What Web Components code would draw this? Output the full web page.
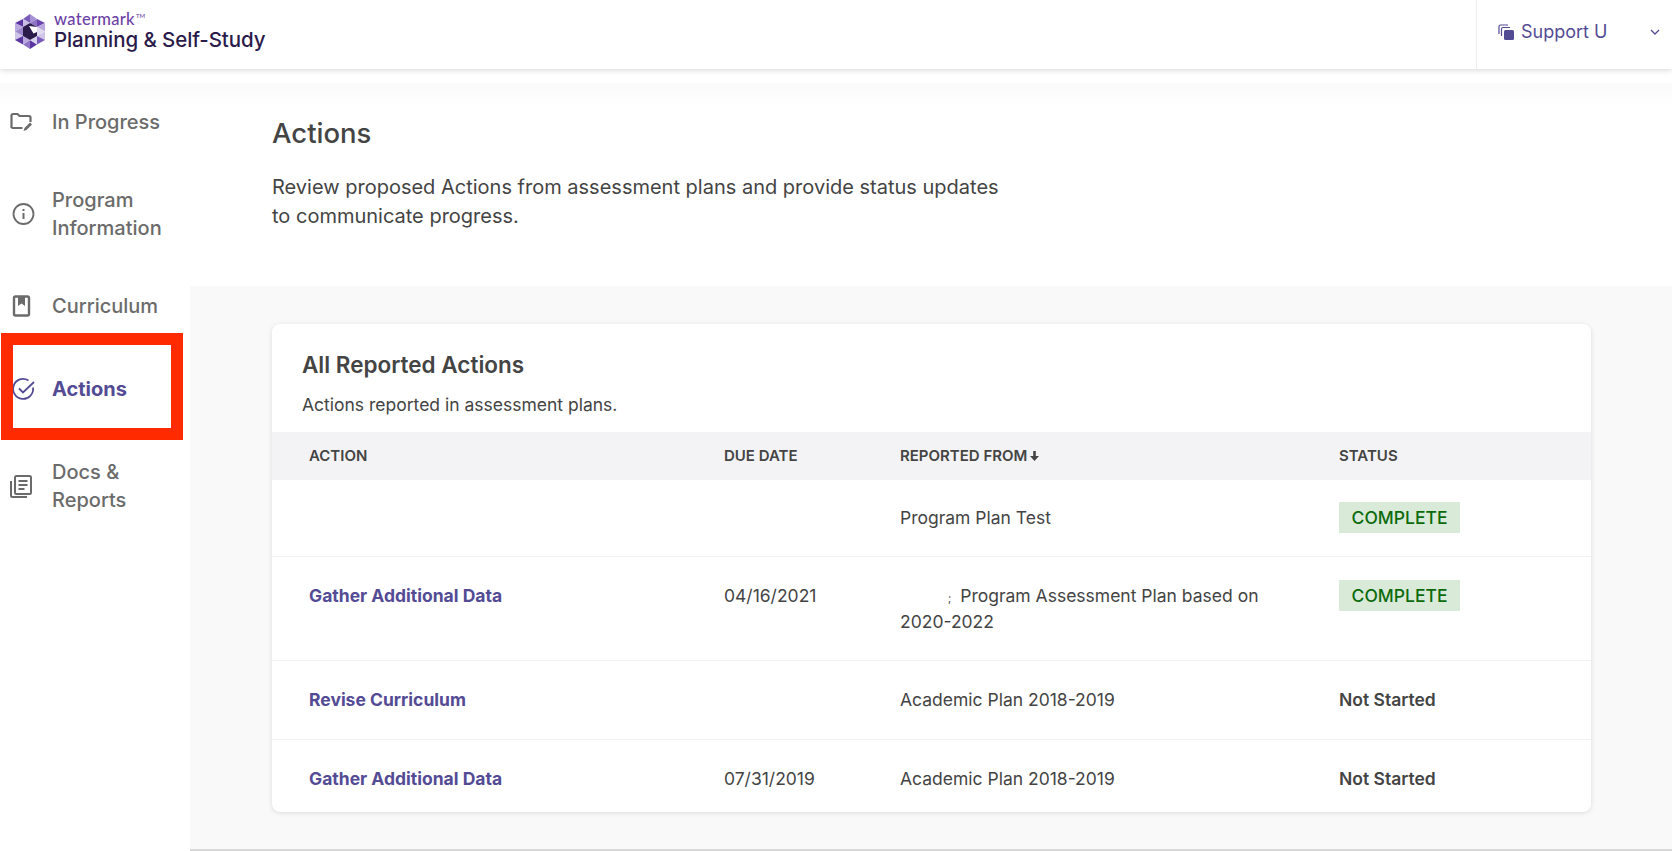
<!DOCTYPE html>
<html>
<head>
<meta charset="utf-8">
<style>
  html, body { margin: 0; height: 100%; background: #fff; font-family: Inter, "Liberation Sans", sans-serif; color: #444; }
  body { height: 851px; overflow: hidden; display: flex; flex-direction: column; }
  .layout { flex: 1; display: flex; min-height: 0; padding-top: 14px; }
</style>
</head>
<body>
<app-header></app-header>
<div class="layout">
  <side-nav>
    <nav-item icon="folder">In Progress</nav-item>
    <nav-item icon="info">Program Information</nav-item>
    <nav-item icon="book">Curriculum</nav-item>
    <nav-item icon="check" active highlight>Actions</nav-item>
    <nav-item icon="docs">Docs &amp; Reports</nav-item>
  </side-nav>
  <main-area>
    <page-intro heading="Actions">Review proposed Actions from assessment plans and provide status updates to communicate progress.</page-intro>
    <report-card heading="All Reported Actions" sub="Actions reported in assessment plans.">
      <action-head></action-head>
      <action-row pad="22px 0 23px" nudge>
        <span slot="from">Program Plan Test</span>
        <status-badge slot="status">COMPLETE</status-badge>
      </action-row>
      <action-row pad="23px 0 25px" nudge>
        <a slot="action">Gather Additional Data</a>
        <span slot="date">04/16/2021</span>
        <redacted-text slot="from">Program Assessment Plan based on 2020-2022</redacted-text>
        <status-badge slot="status">COMPLETE</status-badge>
      </action-row>
      <action-row pad="26px 0 26px">
        <a slot="action">Revise Curriculum</a>
        <span slot="from">Academic Plan 2018-2019</span>
        <strong slot="status">Not Started</strong>
      </action-row>
      <action-row pad="26px 0 20px" last>
        <a slot="action">Gather Additional Data</a>
        <span slot="date">07/31/2019</span>
        <span slot="from">Academic Plan 2018-2019</span>
        <strong slot="status">Not Started</strong>
      </action-row>
    </report-card>
  </main-area>
</div>

<script>
const ICONS = {
  folder: '<g transform="translate(-1.500 0)"><path d="M3 18V5.500C3 4.700 3.700 4 4.500 4H9l2 2h9.500c.8 0 1.500.7 1.500 1.500V12M3 18h11" fill="none" stroke="currentColor" stroke-width="2.200"/><path d="M15 21l1-3 5.500-5.500 2 2L18 20z" fill="currentColor"/></g>',
  info: '<g transform="translate(1.500 0)"><circle cx="12" cy="12" r="10" fill="none" stroke="currentColor" stroke-width="1.800"/><path d="M12 11v6M12 7v2" stroke="currentColor" stroke-width="2"/></g>',
  book: '<g transform="translate(-1 0)"><rect x="5" y="2.500" width="15" height="19" rx="1.500" fill="none" stroke="currentColor" stroke-width="2.400"/><path d="M9 3h7v9l-3.500-2.500L9 12z" fill="currentColor"/></g>',
  check: '<g transform="translate(1.500 0)"><path d="M21.500 10.500a10 10 0 1 1-4.500-7" fill="none" stroke="currentColor" stroke-width="1.800"/><path d="M7.500 11.500l4 4L22.500 5" fill="none" stroke="currentColor" stroke-width="1.800"/></g>',
  docs: '<g transform="translate(-2 0)"><rect x="7" y="2" width="16" height="18" rx="1.500" fill="none" stroke="currentColor" stroke-width="2"/><path d="M10.500 7h9M10.500 11h9M10.500 15h6" stroke="currentColor" stroke-width="2"/><path d="M3 7v14.500c0 .8.7 1.500 1.500 1.500H19" fill="none" stroke="currentColor" stroke-width="2"/></g>'
};

class AppHeader extends HTMLElement {
  connectedCallback() {
    this.attachShadow({ mode: "open" }).innerHTML = `
      <style>
        :host { display: flex; height: 69px; flex: none; background: #fff; box-shadow: 0 1px 6px rgba(0,0,0,.16); position: relative; z-index: 2; justify-content: space-between; }
        .brand { display: flex; align-items: center; gap: 9px; padding: 0 0 6px 15px; }
        .names { display: flex; flex-direction: column; }
        .wm { font: 500 16.500px/16px Lato, sans-serif; color: #6b3fa5; letter-spacing: .3px; }
        .wm sup { font-size: 6px; line-height: 0; vertical-align: 7px; letter-spacing: 0; margin-left: 1px; }
        .pl { font: 500 20.500px/25px Inter, sans-serif; color: #2b1b4b; letter-spacing: -.1px; }
        .support { width: 196px; border-left: 1px solid #eee; display: flex; align-items: center; color: #544b95; font: 400 18px Inter, sans-serif; padding: 0 0 6px 21px; box-sizing: border-box; }
        .support span { margin-left: 7px; }
        .support .chev { margin-left: 43px; }
      </style>
      <div class="brand">
        <svg width="30" height="35" viewBox="0 0 30 35">
          <path d="M15 0L8 5l7 4z" fill="#7a5ab8"/>
          <path d="M15 0l7 5-7 4z" fill="#a692d4"/>
          <path d="M0 9l8-4v8z" fill="#5b35a0"/>
          <path d="M0 9l8 4-8 4.500z" fill="#b9a9de"/>
          <path d="M22 5l8 4-8 4z" fill="#6b45ad"/>
          <path d="M30 9v8.500L22 13z" fill="#b9a9de"/>
          <path d="M30 17.500V26l-8-4z" fill="#cfc5e8"/>
          <path d="M22 22l8 4-8 4.500z" fill="#7a5ab8"/>
          <path d="M0 17.500L8 22l-8 4z" fill="#cfc5e8"/>
          <path d="M0 26l8-4v8.500z" fill="#5b35a0"/>
          <path d="M8 30.500l7-4.500v9z" fill="#8f74c6"/>
          <path d="M15 26l7 4.500-7 4.500z" fill="#5b35a0"/>
          <path d="M8 5l7 4-7 4z" fill="#c9bde6"/>
          <path d="M15 9l7-4v8z" fill="#8f74c6"/>
          <path d="M8 13v9l-8-4.500z" fill="#9d88cc"/>
          <path d="M22 13l8 4.500-8 4.500z" fill="#e0daf0"/>
          <path d="M8 22l7 4-7 4.500z" fill="#b9a9de"/>
          <path d="M22 22v8.500L15 26z" fill="#d9d2ec"/>
          <path d="M15 9l7 4v9l-7 4-7-4v-9z" fill="#2b1b4b"/>
          <path d="M14 12l8 1v5l-3.500 1.500z" fill="#fff"/>
        </svg>
        <div class="names">
          <div class="wm">watermark<sup>TM</sup></div>
          <div class="pl">Planning &amp; Self-Study</div>
        </div>
      </div>
      <div class="support">
        <svg width="16" height="16" viewBox="0 0 16 16"><path d="M1 10V2.500C1 1.700 1.700 1 2.500 1H10M3.500 12V5C3.500 4 4 3.500 5 3.500H12" fill="none" stroke="currentColor" stroke-width="1.200"/><rect x="6" y="6" width="10" height="10" rx="1.500" fill="currentColor"/></svg>
        <span>Support U</span>
        <svg class="chev" width="10" height="6" viewBox="0 0 10 6"><path d="M1 1l4 4 4-4" fill="none" stroke="currentColor" stroke-width="1.300"/></svg>
      </div>`;
  }
}
customElements.define("app-header", AppHeader);

class SideNav extends HTMLElement {
  connectedCallback() {
    this.attachShadow({ mode: "open" }).innerHTML = `
      <style>
        :host { display: flex; flex-direction: column; width: 190px; flex: none; background: linear-gradient(#fafafb 0, #fff 24px); }
      </style>
      <slot></slot>`;
  }
}
customElements.define("side-nav", SideNav);

class NavItem extends HTMLElement {
  connectedCallback() {
    const icon = ICONS[this.getAttribute("icon")];
    this.attachShadow({ mode: "open" }).innerHTML = `
      <style>
        :host { display: block; position: relative; }
        :host([active]) { margin: 5px 0; }
        .row { display: flex; align-items: center; gap: 18px; padding: 25px 20px 25px 10px; color: #6b6b6b; font: 500 20px/28px Inter, sans-serif; }
        :host([active]) .row { color: #544b95; font-weight: 700; }
        svg { flex: none; width: 24px; height: 24px; overflow: visible; }
        .mark { position: absolute; left: 1px; width: 158px; top: -17px; height: 83px; border: 12px solid #ff2a00; pointer-events: none; }
      </style>
      <div class="row"><svg viewBox="0 0 24 24">${icon}</svg><div><slot></slot></div></div>
      ${this.hasAttribute("highlight") ? '<div class="mark"></div>' : ""}`;
  }
}
customElements.define("nav-item", NavItem);

class MainArea extends HTMLElement {
  connectedCallback() {
    this.attachShadow({ mode: "open" }).innerHTML = `
      <style>
        :host { display: flex; flex-direction: column; flex: 1; min-width: 0; background: #f9f9fa; border-bottom: 2px solid #d8d8d8; }
      </style>
      <slot></slot>`;
  }
}
customElements.define("main-area", MainArea);

class PageIntro extends HTMLElement {
  connectedCallback() {
    this.attachShadow({ mode: "open" }).innerHTML = `
      <style>
        :host { display: block; height: 203px; box-sizing: border-box; padding: 34px 82px 0; background: linear-gradient(#fafafb 0, #fff 24px); }
        h1 { margin: 0; font: 500 27.500px/32px Inter, sans-serif; color: #444; }
        p { margin: 24px 0 0; width: 740px; font: 400 20px/29px Inter, sans-serif; color: #444; }
      </style>
      <h1>${this.getAttribute("heading")}</h1>
      <p><slot></slot></p>`;
  }
}
customElements.define("page-intro", PageIntro);

class ReportCard extends HTMLElement {
  connectedCallback() {
    this.attachShadow({ mode: "open" }).innerHTML = `
      <style>
        :host { display: block; margin: 38px 81px 0 82px; background: #fff; border-radius: 8px; box-shadow: 0 1px 5px rgba(0,0,0,.12); overflow: hidden; }
        .top { padding: 26px 30px 0; height: 82px; }
        h2 { margin: 0; font: 600 22.500px/30px Inter, sans-serif; color: #444; }
        p { margin: 13px 0 0; font: 400 17.500px/24px Inter, sans-serif; color: #444; }
      </style>
      <div class="top"><h2>${this.getAttribute("heading")}</h2><p>${this.getAttribute("sub")}</p></div>
      <slot></slot>`;
  }
}
customElements.define("report-card", ReportCard);

const ROW_COLUMNS = "37px 415px 176px 439px 1fr";

class ActionHead extends HTMLElement {
  connectedCallback() {
    this.attachShadow({ mode: "open" }).innerHTML = `
      <style>
        :host { display: grid; grid-template-columns: ${ROW_COLUMNS}; align-items: center; height: 48px; background: #f3f3f5; font: 600 15px/20px Inter, sans-serif; color: #444; }
        .first { grid-column: 2; }
        svg { margin-left: 3px; }
      </style>
      <div class="first">ACTION</div><div>DUE DATE</div>
      <div>REPORTED FROM<svg width="9" height="10" viewBox="0 0 9 10"><path d="M3.200 0h2.600v5H9L4.500 10 0 5h3.200z" fill="currentColor"/></svg></div>
      <div>STATUS</div>`;
  }
}
customElements.define("action-head", ActionHead);

class ActionRow extends HTMLElement {
  connectedCallback() {
    this.attachShadow({ mode: "open" }).innerHTML = `
      <style>
        :host { display: grid; grid-template-columns: ${ROW_COLUMNS}; align-items: start; border-bottom: 1.500px solid #f1f1f2; font: 400 17.500px/26px Inter, sans-serif; color: #444; padding: ${this.getAttribute("pad")}; }
        :host([last]) { border-bottom: 0; }
        :host([nudge]) .cell { padding-top: 3px; }
        .action { grid-column: 2; color: #544b95; font-weight: 700; }
        .status ::slotted(strong) { font-weight: 600; font-size: 17.500px; }
      </style>
      <div class="cell action"><slot name="action"></slot></div>
      <div class="cell"><slot name="date"></slot></div>
      <div class="cell"><slot name="from"></slot></div>
      <div class="status"><slot name="status"></slot></div>`;
  }
}
customElements.define("action-row", ActionRow);

class StatusBadge extends HTMLElement {
  connectedCallback() {
    this.attachShadow({ mode: "open" }).innerHTML = `
      <style>
        :host { display: inline-block; width: 121px; height: 31px; text-align: center; background: #d9ead9; color: #0b6b0b; font: 500 17.500px/31px Inter, sans-serif; vertical-align: top; }
      </style>
      <slot></slot>`;
  }
}
customElements.define("status-badge", StatusBadge);

// the start of this title is blanked out in the reference, only a sliver is left
class RedactedText extends HTMLElement {
  connectedCallback() {
    this.attachShadow({ mode: "open" }).innerHTML = `
      <style>
        :host { display: block; width: 374px; }
        .gap { display: inline-block; width: 48px; }
        .sliver { font-size: 11px; line-height: 0; margin-right: 4px; }
      </style>
      <span class="gap"></span><span class="sliver">;</span> <slot></slot>`;
  }
}
customElements.define("redacted-text", RedactedText);
</script>
</body>
</html>
